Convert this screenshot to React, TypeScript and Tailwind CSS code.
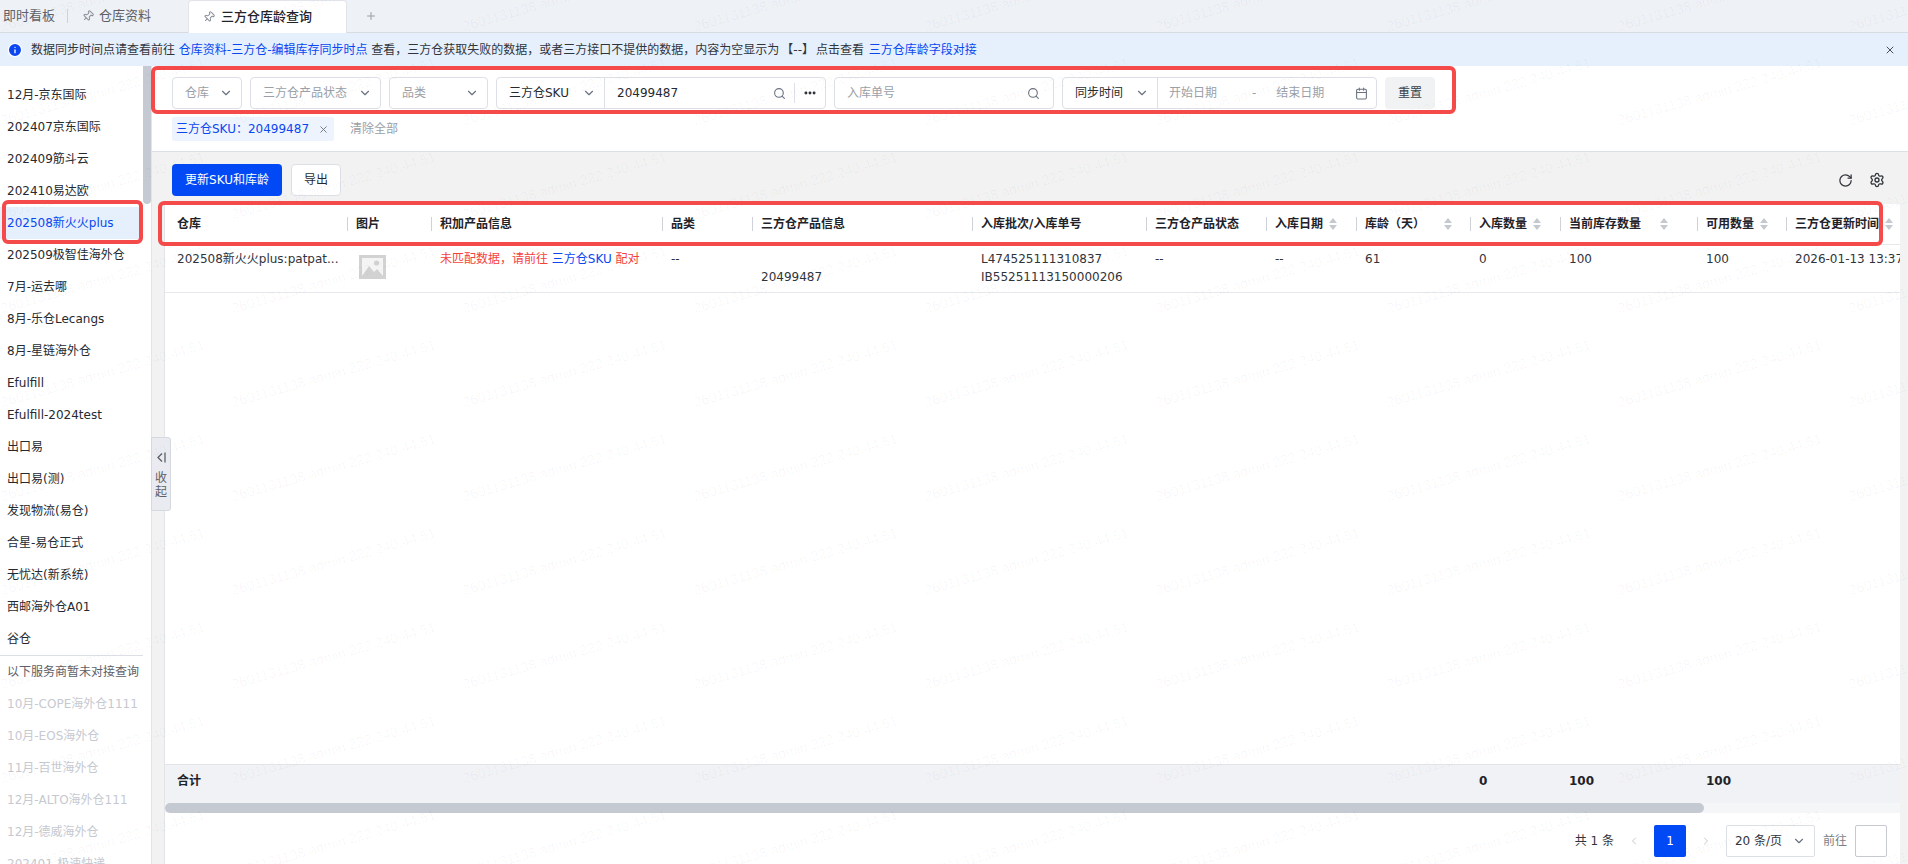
import {
  Calendar,
  ChevronDown,
  ChevronLeft,
  ChevronRight,
  Info,
  MoreHorizontal,
  Pin,
  Plus,
  RotateCw,
  Search,
  Settings,
  X,
} from "lucide-react";

const activeWarehouses = [
  "12月-京东国际",
  "202407京东国际",
  "202409筋斗云",
  "202410易达欧",
  "202508新火火plus",
  "202509极智佳海外仓",
  "7月-运去哪",
  "8月-乐仓Lecangs",
  "8月-星链海外仓",
  "Efulfill",
  "Efulfill-2024test",
  "出口易",
  "出口易(测)",
  "发现物流(易仓)",
  "合星-易仓正式",
  "无忧达(新系统)",
  "西邮海外仓A01",
  "谷仓",
];

const disabledWarehouses = [
  "10月-COPE海外仓1111",
  "10月-EOS海外仓",
  "11月-百世海外仓",
  "12月-ALTO海外仓111",
  "12月-德威海外仓",
  "202401-极速快递",
];

const columns = [
  { title: "仓库", sort: false },
  { title: "图片", sort: false },
  { title: "积加产品信息", sort: false },
  { title: "品类", sort: false },
  { title: "三方仓产品信息", sort: false },
  { title: "入库批次/入库单号", sort: false },
  { title: "三方仓产品状态", sort: false },
  { title: "入库日期", sort: true },
  { title: "库龄（天）", sort: true, wide: true },
  { title: "入库数量", sort: true },
  { title: "当前库存数量", sort: true, wide: true },
  { title: "可用数量", sort: true },
  { title: "三方仓更新时间", sort: true },
];

const gridCols =
  "grid grid-cols-[182px_84px_231px_90px_220px_174px_120px_90px_114px_90px_137px_89px_220px]";

const SortCaret = () => (
  <svg width="8" height="14" viewBox="0 0 8 14" className="shrink-0 fill-[#c4c8cf]">
    <path d="M4 1 L8 6 H0 Z" />
    <path d="M4 13 L0 8 H8 Z" />
  </svg>
);

const ImagePlaceholder = () => (
  <svg width="27" height="24" viewBox="0 0 27 24">
    <rect width="27" height="24" fill="#d2d2d2" />
    <rect x="3" y="3" width="21" height="18" fill="#f4f4f4" />
    <circle cx="17.5" cy="8" r="2.6" fill="#d2d2d2" />
    <path d="M3 21 L10 11 L15 17 L18 14 L24 21 Z" fill="#d2d2d2" />
  </svg>
);

const FilterSelect = ({ label, width }: { label: string; width: string }) => (
  <div className={`${width} h-8 flex items-center justify-between pl-3 pr-2 bg-white border border-[#dcdfe6] rounded-[4px] text-[#9a9fa8]`}>
    <span>{label}</span>
    <ChevronDown size={14} className="text-[#6b7280]" />
  </div>
);

const Watermark = () => (
  <div className="absolute inset-0 pointer-events-none overflow-hidden grid grid-cols-[repeat(9,231px)] auto-rows-[94px] pl-[4px] -mt-[57px] font-['Liberation_Sans',sans-serif]">
    {Array.from({ length: 90 }).map((_, i) => (
      <div key={i} className="relative">
        <span className="absolute left-0 bottom-0 origin-bottom-left -rotate-[16deg] whitespace-nowrap text-[14px] text-[#000000]/[0.035]">
          2601131138 admin 222.240.44.51
        </span>
      </div>
    ))}
  </div>
);

const Sidebar = () => (
  <div className="w-[152px] shrink-0 flex bg-white border-r border-[#e2e4e9] overflow-hidden">
    <div className="w-[143px] shrink-0 pt-[13px] text-[#262a30]">
      {activeWarehouses.map((name) => (
        <div
          key={name}
          className={`h-8 flex items-center pl-[7px] whitespace-nowrap ${
            name === "202508新火火plus" ? "bg-[#e6f0fd] text-[#0a47f0]" : ""
          }`}
        >
          {name}
        </div>
      ))}
      <div className="border-t border-[#dcdfe6] h-[33px] flex items-center pl-[7px] whitespace-nowrap text-[#5c6068]">
        以下服务商暂未对接查询
      </div>
      {disabledWarehouses.map((name) => (
        <div key={name} className="h-8 flex items-center pl-[7px] whitespace-nowrap text-[#c6c9d0]">
          {name}
        </div>
      ))}
    </div>
    <div className="w-2 shrink-0">
      <div className="h-[138px] rounded-b-full bg-[#c5cad2]" />
    </div>
  </div>
);

const FilterBar = () => (
  <div className="h-[86px] shrink-0 bg-white border-b border-[#dcdfe6] pl-5 pt-[11px]">
    <div className="flex gap-2">
      <FilterSelect label="仓库" width="w-[70px]" />
      <FilterSelect label="三方仓产品状态" width="w-[131px]" />
      <FilterSelect label="品类" width="w-[99px]" />
      <div className="w-[330px] h-8 flex items-center border border-[#dcdfe6] rounded-[4px]">
        <div className="w-[108px] h-full flex items-center justify-between pl-3 pr-2 border-r border-[#dcdfe6] text-[#262a30]">
          <span>三方仓SKU</span>
          <ChevronDown size={14} className="text-[#6b7280]" />
        </div>
        <span className="flex-1 pl-[12px] text-[#262a30]">20499487</span>
        <Search size={13} className="text-[#6b7280]" />
        <div className="ml-[8px] h-[20px] border-l border-[#dcdfe6]" />
        <MoreHorizontal size={14} strokeWidth={3} className="mx-[8px] text-[#262a30]" />
      </div>
      <div className="w-[220px] h-8 flex items-center justify-between pl-3 pr-[13px] border border-[#dcdfe6] rounded-[4px] text-[#9a9fa8]">
        <span>入库单号</span>
        <Search size={13} className="text-[#6b7280]" />
      </div>
      <div className="w-[315px] h-8 flex items-center border border-[#dcdfe6] rounded-[4px] text-[#9a9fa8]">
        <div className="w-[95px] h-full flex items-center justify-between pl-3 pr-2 border-r border-[#dcdfe6] text-[#262a30]">
          <span>同步时间</span>
          <ChevronDown size={14} className="text-[#6b7280]" />
        </div>
        <span className="ml-[11px]">开始日期</span>
        <span className="ml-[35px]">-</span>
        <span className="ml-[20px]">结束日期</span>
        <Calendar size={13} className="ml-[31px] text-[#6b7280]" />
      </div>
      <div className="w-[50px] h-8 flex items-center justify-center bg-[#f1f2f4] rounded-[4px] text-[#3a3f47]">
        重置
      </div>
    </div>
    <div className="flex items-center mt-2">
      <div className="h-6 w-[162px] flex items-center justify-between px-1 bg-[#eef4fd] rounded-[2px] text-[#0a47f0]">
        <span>三方仓SKU：20499487</span>
        <X size={11} className="mr-[1px] text-[#6b7280]" />
      </div>
      <span className="ml-4 text-[#9a9fa8]">清除全部</span>
    </div>
  </div>
);

const Toolbar = () => (
  <div className="h-[52px] shrink-0 pl-5 pr-[23px] pt-3 flex items-start justify-between">
    <div className="flex gap-[9px]">
      <div className="w-[110px] h-8 flex items-center justify-center rounded-[4px] bg-[#0049f5] text-white">
        更新SKU和库龄
      </div>
      <div className="w-[50px] h-8 flex items-center justify-center rounded-[4px] bg-white border border-[#dcdfe6] text-[#262a30]">
        导出
      </div>
    </div>
    <div className="flex items-center h-8 gap-[16px] text-[#30343b]">
      <RotateCw size={15} />
      <Settings size={16} />
    </div>
  </div>
);

const DataTable = () => (
  <div className="flex-1 min-h-0 flex flex-col ml-[12px] mr-[8px] bg-white border-l border-[#e2e4e9]">
    <div className="flex-1 min-h-0 overflow-hidden">
      <div className={`${gridCols} h-[41px] border-b border-[#e6e8ec] font-semibold text-[#1f2329]`}>
        {columns.map((col, i) => (
          <div key={col.title} className={`flex items-center whitespace-nowrap ${i === 0 ? "pl-3" : ""}`}>
            <div className={`flex items-center gap-[6px] ${i === 0 ? "" : "border-l border-[#cfd2d8] pl-2"} h-[14px]`}>
              <span>{col.title}</span>
              {col.wide && <span className="w-[7px]" />}
              {col.sort && <SortCaret />}
            </div>
          </div>
        ))}
      </div>
      <div className={`${gridCols} h-[48px] border-b border-[#e6e8ec] text-[#30343b] leading-[18px] pt-[5px]`}>
        <div className="pl-3 whitespace-nowrap overflow-hidden">202508新火火plus:patpat...</div>
        <div className="pl-[12px] pt-[5px]">
          <ImagePlaceholder />
        </div>
        <div className="pl-[9px] whitespace-nowrap text-[#f5413a]">
          未匹配数据，请前往 <span className="text-[#0a47f0]">三方仓SKU</span> 配对
        </div>
        <div className="pl-[9px]">--</div>
        <div className="pl-[9px]">
          <div className="h-[18px]" />
          <div>20499487</div>
        </div>
        <div className="pl-[9px]">
          <div>L474525111310837</div>
          <div>IB55251113150000206</div>
        </div>
        <div className="pl-[9px]">--</div>
        <div className="pl-[9px]">--</div>
        <div className="pl-[9px]">61</div>
        <div className="pl-[9px]">0</div>
        <div className="pl-[9px]">100</div>
        <div className="pl-[9px]">100</div>
        <div className="pl-[9px] whitespace-nowrap">2026-01-13 13:37:12</div>
      </div>
    </div>
    <div className={`${gridCols} h-[39px] pb-[7px] shrink-0 bg-[#f1f2f5] border-t border-[#e2e4e9] items-center font-semibold text-[#1f2329] overflow-hidden`}>
      <div className="pl-3">合计</div>
      <div />
      <div />
      <div />
      <div />
      <div />
      <div />
      <div />
      <div />
      <div className="pl-[9px] font-bold">0</div>
      <div className="pl-[9px] font-bold">100</div>
      <div className="pl-[9px] font-bold">100</div>
      <div />
    </div>
    <div className="h-[10px] shrink-0 bg-[#f5f6f8]">
      <div className="w-[1539px] h-full rounded-full bg-[#c5cad2]" />
    </div>
    <div className="h-[51px] shrink-0 pt-3 pr-[13px] flex items-start justify-end text-[#30343b]">
      <div className="h-8 flex items-center">共 1 条</div>
      <ChevronLeft size={12} className="ml-[14px] mt-[10px] text-[#c6c9d0]" />
      <div className="ml-[14px] w-8 h-8 flex items-center justify-center rounded-[2px] bg-[#0049f5] text-white">1</div>
      <ChevronRight size={12} className="ml-[14px] mt-[10px] text-[#c6c9d0]" />
      <div className="ml-[14px] w-[89px] h-8 flex items-center justify-between pl-2 pr-2 border border-[#dcdfe6] rounded-[2px]">
        <span>20 条/页</span>
        <ChevronDown size={14} className="text-[#6b7280]" />
      </div>
      <div className="ml-2 h-8 flex items-center text-[#7a7f87]">前往</div>
      <div className="ml-2 w-8 h-8 border border-[#c6c9d0] rounded-[2px]" />
    </div>
  </div>
);

const App = () => {
  return (
    <div className="relative w-full h-screen overflow-hidden flex flex-col bg-white text-[12px] font-['DejaVu_Sans','Noto_Sans_CJK_SC',sans-serif]">
      {/* tabs */}
      <div className="h-[33px] shrink-0 flex bg-[#eef1f5] border-b border-[#d8dbe0] text-[13px] text-[#5c6068]">
        <div className="flex items-center pl-[3px] w-[67px]">
          <span>即时看板</span>
        </div>
        <div className="my-[9px] border-l border-[#cfd2d8]" />
        <div className="flex items-center pl-[14px] w-[120px]">
          <Pin size={12} className="rotate-45 mr-[5px] text-[#8a8f98]" />
          <span>仓库资料</span>
        </div>
        <div className="w-[159px] h-[33px] flex items-center pl-[14px] bg-white border border-b-0 border-[#e2e4e9] rounded-t-[4px] font-medium text-[#1f2329]">
          <Pin size={12} className="rotate-45 mr-[6px] text-[#8a8f98]" />
          <span>三方仓库龄查询</span>
        </div>
        <div className="flex items-center pl-[18px] text-[#9a9fa8]">
          <Plus size={12} />
        </div>
      </div>

      {/* notice */}
      <div className="h-[33px] shrink-0 flex items-center bg-[#e6f0fd] pl-[7px] pr-[12px] text-[#30343b]">
        <Info size={16} fill="#0a47f0" stroke="#ffffff" className="mr-[8px]" />
        <span>
          数据同步时间点请查看前往 <span className="text-[#0a47f0]">仓库资料-三方仓-编辑库存同步时点</span> 查看，三方仓获取失败的数据，或者三方接口不提供的数据，内容为空显示为<span className="mx-[2px]">【--】</span>点击查看 <span className="text-[#0a47f0] ml-[1px]">三方仓库龄字段对接</span>
        </span>
        <X size={12} className="ml-auto text-[#4b5058]" />
      </div>

      <div className="flex-1 min-h-0 flex">
        <Sidebar />
        <div className="flex-1 min-w-0 flex flex-col bg-[#f2f2f2]">
          <FilterBar />
          <Toolbar />
          <DataTable />
        </div>
      </div>

      {/* collapse handle */}
      <div className="absolute left-[151px] top-[437px] w-[20px] h-[74px] flex flex-col items-center pt-[14px] bg-[#e9ebf0] border border-[#d5d8de] rounded-r-[3px] text-[#5c6068] leading-[14px]">
        <svg width="9" height="11" viewBox="0 0 9 11" fill="none" stroke="#5c6068" strokeWidth="1.3" className="mb-[8px]">
          <path d="M5 1.5 L1 5.5 L5 9.5" />
          <path d="M8 0.5 V10.5" />
        </svg>
        <span>收</span>
        <span>起</span>
      </div>

      <Watermark />

      {/* red review marks */}
      <div className="absolute left-[151px] top-[66px] w-[1305px] h-[48px] border-[4px] border-[#f44a4a] rounded-[6px] pointer-events-none" />
      <div className="absolute left-[158px] top-[201px] w-[1725px] h-[45px] border-[4px] border-[#f44a4a] rounded-[6px] pointer-events-none" />
      <div className="absolute left-[2px] top-[200px] w-[141px] h-[44px] border-[4px] border-[#f44a4a] rounded-[6px] pointer-events-none" />
    </div>
  );
};

export default App;
